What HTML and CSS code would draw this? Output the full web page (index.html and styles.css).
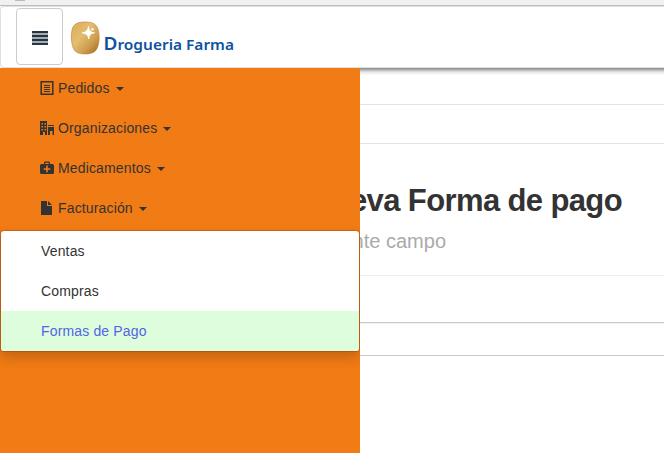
FILE: index.html
```html
<!DOCTYPE html>
<html lang="es">
<head>
<meta charset="utf-8">
<title>Drogueria Farma</title>
<link rel="stylesheet" href="styles.css">
</head>
<body>
<div class="chrome"><span class="chrome-mark"></span></div>
<header class="navbar">
  <button class="toggle" aria-label="Menu">
    <svg width="16" height="15" viewBox="0 0 16 15"><path fill="#a3adb3" d="M0 0h16v14H0z"/><path fill="#263540" d="M0 0h16v2H0zM0 4h16v2H0zM0 8h16v2H0zM0 12h16v2H0z"/></svg>
  </button>
  <svg class="brand" width="166" height="36" viewBox="0 0 166 36">
    <defs>
      <linearGradient id="gold" x1="0" y1="0" x2="1" y2="1">
        <stop offset="0" stop-color="#d9aa55"/><stop offset=".4" stop-color="#e4bd70"/><stop offset=".7" stop-color="#cd9c4c"/><stop offset="1" stop-color="#9a6421"/>
      </linearGradient>
    </defs>
    <path d="M15 2C23 2 27 4 28.500 11C29.500 16 29.500 21 28 26C26.500 32 22 34 15.500 34C8 34 4 32 2.500 26C1 20 1 15 2 10C3.500 3.500 8 2 15 2Z" fill="url(#gold)" stroke="#b98439" stroke-width=".6"/>
    <path d="M18.500 6.500Q18.700 12.300 24.500 12.800Q19 13.200 18.700 19Q18 13.300 12.300 12.900Q18 12.300 18.500 6.500Z" fill="#fff" stroke="#fff" stroke-width=".9"/>
    <circle cx="22.500" cy="9.300" r="1.200" fill="#fff"/>
    <text class="brand-text" x="33.500" y="30" textLength="130.500" lengthAdjust="spacingAndGlyphs"><tspan class="brand-cap">D</tspan>rogueria Farma</text>
  </svg>
</header>
<div class="page">
  <nav class="sidebar">
    <a class="item"><svg width="14" height="14" viewBox="0 0 14 14"><path fill="none" stroke="#333" stroke-width="1.500" d="M1.200.8h11.600v12.400H1.200z"/><path fill="none" stroke="#333" d="M4 4.500h6M4 6.500h6M4 8.500h6M4 10.500h6"/></svg>Pedidos<i class="caret"></i></a>
    <a class="item"><svg width="14" height="14" viewBox="0 0 14 14"><path fill="#333" fill-rule="evenodd" d="M0 0h7v14H5v-3H3v3H0zM1.500 2v1.500H3V2zm3 0v1.500H6V2zm-3 3v1.500H3V5zm3 0v1.500H6V5zm-3 3v1.500H3V8zm3 0v1.500H6V8zM8 4h6v1H8zM8 6h6v8h-1.500v-4H10v4H8z"/></svg>Organizaciones<i class="caret"></i></a>
    <a class="item"><svg width="14" height="14" viewBox="0 0 14 14"><path fill="#333" fill-rule="evenodd" d="M4 3V1.500Q4 .5 5 .5h4q1 0 1 1V3h2.500Q14 3 14 4.500v7Q14 13 12.500 13h-11Q0 13 0 11.500v-7Q0 3 1.500 3zM5.300 3h3.400V1.700H5.300zM6.200 4.500v2.700H3.700v1.500h2.500v2.600h1.600V8.700h2.500V7.200H7.800V4.500z"/></svg>Medicamentos<i class="caret"></i></a>
    <a class="item"><svg width="14" height="14" viewBox="0 0 14 14"><path fill="#333" d="M1 0h6v5h5v9H1zM8 0l4 4H8z"/></svg>Facturación<i class="caret"></i></a>
    <div class="submenu">
      <a class="option">Ventas</a>
      <a class="option">Compras</a>
      <a class="option active">Formas de Pago</a>
    </div>
  </nav>
  <main class="content">
    <div class="strip first"></div>
    <div class="strip second"></div>
    <section class="heading">
      <h1>eva Forma de pago</h1>
      <p>nte campo</p>
    </section>
    <div class="strip third"></div>
    <div class="strip fourth"></div>
  </main>
</div>
</body>
</html>
```
FILE: styles.css
```css
* { box-sizing: border-box; }
body {
  margin: 0;
  height: 453px;
  overflow: hidden;
  display: flex;
  flex-direction: column;
  background: #fff;
  color: #333;
  font: 14px/20px "Liberation Sans", Arial, sans-serif;
}
.chrome {
  height: 6px;
  flex: none;
  background: #f2f1f0;
  border-bottom: 1px solid #bdbdbd;
}
.chrome-mark {
  display: block;
  width: 10px;
  height: 1px;
  margin-left: 15px;
  background: #bbb;
}
.navbar {
  height: 62px;
  flex: none;
  display: flex;
  align-items: flex-start;
  padding: 2px 15px 0;
  background: #fff;
  border: 1px solid #e0e0e0;
  border-right: 0;
  border-radius: 4px 0 0 4px;
}
.toggle {
  width: 47px;
  height: 57px;
  margin-top: -1px;
  padding: 3px 0 0;
  display: flex;
  align-items: center;
  justify-content: center;
  background: #fff;
  border: 1px solid #ccc;
  border-radius: 4px;
}
.brand { margin: 11px 0 0 7px; }
.brand-text { font: 600 15px "Noto Sans", sans-serif; fill: #0d529f; }
.brand-cap { font-size: 18.5px; }
.page { flex: 1; display: flex; min-height: 0; }
.sidebar {
  width: 360px;
  flex: none;
  background: #f17b14;
  letter-spacing: .15px;
  position: relative;
  clip-path: inset(0);
}
.item {
  height: 40px;
  padding-left: 40px;
  display: flex;
  align-items: center;
}
.item svg { margin-right: 4px; }
.caret {
  margin-left: 6px;
  margin-top: 2px;
  border-top: 4px solid #333;
  border-left: 4px solid transparent;
  border-right: 4px solid transparent;
}
.submenu {
  margin-top: 2px;
  background: #fff;
  background-clip: padding-box;
  border: 1px solid rgba(0, 0, 0, .15);
  border-radius: 4px;
  box-shadow: 0 6px 12px rgba(0, 0, 0, .175);
}
.option {
  display: block;
  height: 40px;
  padding: 10px 40px;
}
.option.active { background: #ddfddd; color: #5364e5; border-radius: 0 0 3px 3px; }
.content {
  flex: 1;
  min-width: 0;
  overflow: hidden;
  background: linear-gradient(#888, #b5b5b5 2px, #e5e5e5 4px, #fff 7px) no-repeat 0 0 / 100% 7px #fff;
}
.strip { border-bottom: 1px solid #e4e4e4; }
.first { height: 37px; }
.second { height: 39px; }
.heading {
  height: 132px;
  padding-top: 39px;
  border-bottom: 1px solid #eee;
  white-space: nowrap;
}
h1 {
  margin: 0 42px 0 -20px;
  font-size: 31px;
  line-height: 36px;
  letter-spacing: -.62px;
  text-align: right;
}
.heading p {
  margin: 10px 218px 0 -20px;
  font-size: 20px;
  line-height: 24px;
  color: #aaa;
  text-align: right;
}
.third { height: 47px; border-color: #c8c8c8; box-shadow: 0 1px 1px rgba(0, 0, 0, .05); }
.fourth { height: 33px; border-color: #c8c8c8; }
```
